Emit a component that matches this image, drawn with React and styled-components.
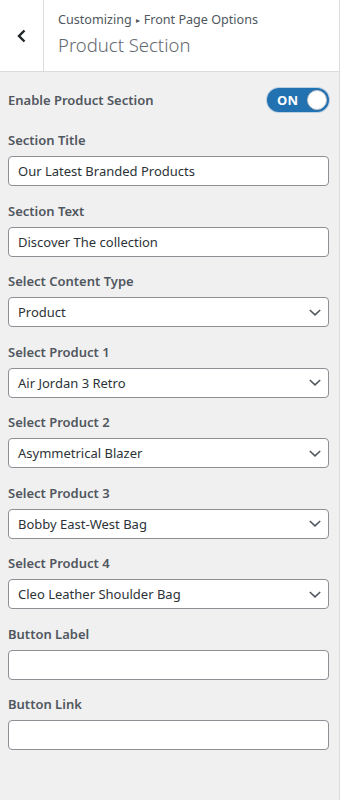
import React from "react";
import styled, { createGlobalStyle } from "styled-components";

const Global = createGlobalStyle`
  html, body { margin: 0; padding: 0; background: #f0f0f1; }
  body { font-family: "Noto Sans", "Open Sans", sans-serif; -webkit-font-smoothing: antialiased; }
  * { box-sizing: border-box; }
`;

const Panel = styled.div`
  width: 340px;
  min-height: 800px;
  background: #f0f0f1;
  border-right: 1px solid #dcdcde;
`;

const Header = styled.div`
  display: flex;
  height: 72px;
  background: #fff;
  border-bottom: 1px solid #dcdcde;
`;

const BackButton = styled.div`
  width: 44px;
  flex: none;
  display: flex;
  align-items: center;
  justify-content: center;
  border-right: 1px solid #dcdcde;
  color: #1d2327;
`;

const TitleBox = styled.div`
  display: flex;
  flex-direction: column;
  padding: 10px 0 0 14px;
`;

const Crumb = styled.div`
  font-size: 12.6px;
  line-height: 20px;
  color: #50575e;
  display: flex;
  align-items: center;
  gap: 4px;
`;

const Arrow = styled.span`
  font-size: 8px;
  color: #50575e;
`;

const Title = styled.div`
  font-size: 18.5px;
  font-weight: 300;
  line-height: 30px;
  color: #646970;
`;

const Body = styled.div`
  padding: 16px 10px 20px 8px;
  display: flex;
  flex-direction: column;
`;

const ToggleRow = styled.div`
  display: flex;
  align-items: center;
  justify-content: space-between;
  height: 24px;
  margin-bottom: 18px;
`;

const Label = styled.div`
  font-size: 13px;
  font-weight: 600;
  line-height: 20px;
  color: #50575e;
`;

const Toggle = styled.div`
  width: 62px;
  height: 24px;
  border-radius: 12px;
  background: #2271b1;
  display: flex;
  align-items: center;
  justify-content: space-between;
  padding: 0 2px 0 10px;
  box-shadow: 0 0 0 1px rgba(34, 113, 177, 0.25);
`;

const ToggleText = styled.span`
  color: #fff;
  font-size: 13px;
  font-weight: 700;
  letter-spacing: 0.3px;
`;

const Knob = styled.span`
  width: 20px;
  height: 20px;
  border-radius: 50%;
  background: #fff;
  border: 1px solid #c3c4c7;
`;

const Field = styled.div`
  display: flex;
  flex-direction: column;
  gap: 6px;
  margin-bottom: 14.5px;
`;

const Box = styled.div`
  height: 30px;
  background: #fff;
  border: 1px solid #8c8f94;
  border-radius: 4px;
  display: flex;
  align-items: center;
  justify-content: space-between;
  padding: 0 7px 0 9px;
  font-size: 13px;
  color: #2c3338;
`;

const Chevron = () => (
  <svg width="12" height="7" viewBox="0 0 12 7" fill="none">
    <path d="M0.8 1 L6 5.8 L11.2 1" stroke="#50575e" strokeWidth="1.6" />
  </svg>
);

const fields = [
  { label: "Section Title", value: "Our Latest Branded Products" },
  { label: "Section Text", value: "Discover The collection" },
  { label: "Select Content Type", value: "Product", select: true },
  { label: "Select Product 1", value: "Air Jordan 3 Retro", select: true },
  { label: "Select Product 2", value: "Asymmetrical Blazer", select: true },
  { label: "Select Product 3", value: "Bobby East-West Bag", select: true },
  { label: "Select Product 4", value: "Cleo Leather Shoulder Bag", select: true },
  { label: "Button Label", value: "" },
  { label: "Button Link", value: "" },
];

export default function App() {
  return (
    <Panel>
      <Global />
      <Header>
        <BackButton>
          <svg width="12" height="14" viewBox="0 0 12 14">
            <path d="M8.5 1.5 L3 7 L8.5 12.5" stroke="#1d2327" strokeWidth="2.4" fill="none" />
          </svg>
        </BackButton>
        <TitleBox>
          <Crumb>
            Customizing <Arrow>▸</Arrow> Front Page Options
          </Crumb>
          <Title>Product Section</Title>
        </TitleBox>
      </Header>
      <Body>
        <ToggleRow>
          <Label>Enable Product Section</Label>
          <Toggle>
            <ToggleText>ON</ToggleText>
            <Knob />
          </Toggle>
        </ToggleRow>
        {fields.map((f) => (
          <Field key={f.label}>
            <Label>{f.label}</Label>
            <Box>
              <span>{f.value}</span>
              {f.select && <Chevron />}
            </Box>
          </Field>
        ))}
      </Body>
    </Panel>
  );
}
